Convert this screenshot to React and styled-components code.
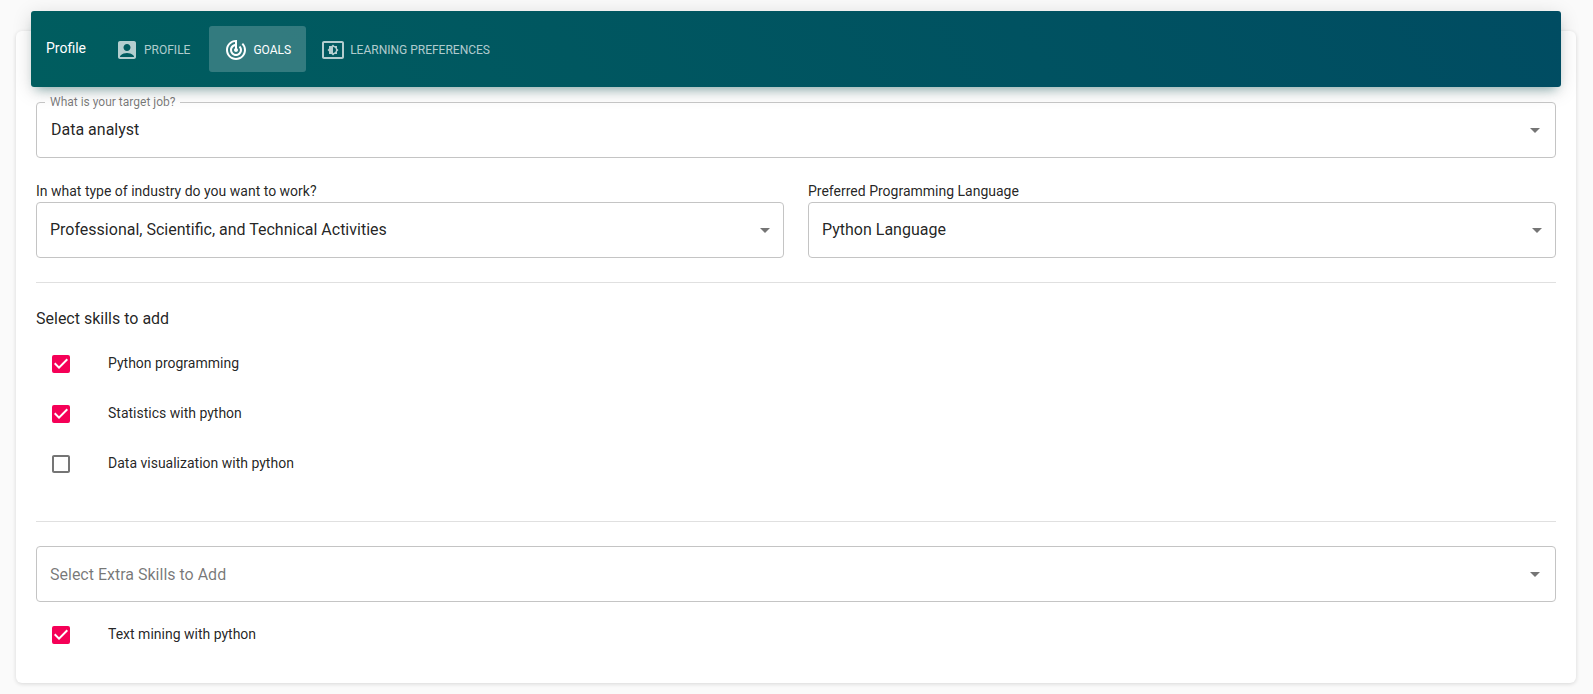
import { useId, useState } from "react";
import styled, { createGlobalStyle } from "styled-components";
import {
  MdAccountBox,
  MdArrowDropDown,
  MdCheckBox,
  MdCheckBoxOutlineBlank,
  MdSettingsBrightness,
  MdTrackChanges,
} from "react-icons/md";

const GlobalStyle = createGlobalStyle`
  *, *::before, *::after { box-sizing: border-box; }
  body {
    margin: 0;
    background: #fafafa;
    color: rgba(0, 0, 0, 0.87);
    font-family: Roboto, "Liberation Sans", sans-serif;
    font-size: 14px;
    line-height: 20px;
    -webkit-font-smoothing: antialiased;
  }
`;

const Page = styled.main`
  display: flow-root;
  padding: 0 17px 11px 16px;
`;

const Card = styled.section`
  display: flex;
  flex-direction: column;
  margin-top: 31px;
  padding-bottom: 23px;
  border-radius: 6px;
  background: #fff;
  box-shadow: 0 1px 4px rgba(0, 0, 0, 0.14);
`;

const Header = styled.header`
  display: flex;
  align-items: center;
  margin: -20px 15px 0;
  padding: 15px;
  border-radius: 3px;
  background: linear-gradient(60deg, #005d5f, #004c62);
  box-shadow: 0 4px 20px rgba(0, 0, 0, 0.14), 0 7px 10px -5px rgba(0, 96, 96, 0.4);
  color: #fff;
`;

const Title = styled.h1`
  margin: 0 14px 2px 0;
  font-size: 14px;
  font-weight: 400;
`;

const Tabs = styled.nav`
  display: flex;
`;

const Tab = styled.button`
  display: flex;
  align-items: center;
  gap: 5px;
  height: 46px;
  padding: 2px 15px 0;
  border: 0;
  border-radius: 3px;
  background: ${(p) => (p.$active ? "rgba(255, 255, 255, 0.2)" : "transparent")};
  color: ${(p) => (p.$active ? "#fff" : "rgba(255, 255, 255, 0.7)")};
  font: 400 12px/20px Roboto, "Liberation Sans", sans-serif;
  text-transform: uppercase;
  cursor: pointer;

  &:nth-child(2) { margin-left: 4px; }
  svg { flex: none; }
`;

const Form = styled.form`
  display: flex;
  flex-direction: column;
  padding: 9px 20px 0;
`;

const Columns = styled.div`
  display: grid;
  grid-template-columns: 1fr 1fr;
  gap: 24px;
  margin-top: 24px;
`;

const Field = styled.div`
  display: flex;
  flex-direction: column;
`;

const FieldLabel = styled.label`
  padding-bottom: 2px;
  line-height: 18px;
`;

const Outline = styled.div`
  position: relative;
  height: 56px;
  border: 1px solid #c4c4c4;
  border-radius: 4px;
`;

const NotchedOutline = styled.fieldset`
  min-width: 0;
  margin: 0;
  padding: 0 0 6px;
  border: 1px solid #c4c4c4;
  border-radius: 4px;
`;

const NotchedBody = styled.div`
  position: relative;
  height: 42px;
  padding-left: 1px;
`;

const Notch = styled.legend`
  margin-left: 8px;
  padding: 0 5px;
  color: rgba(0, 0, 0, 0.54);
  font-size: 12px;
  line-height: 13px;

  label { display: block; }
`;

const Select = styled.select`
  display: block;
  width: 100%;
  height: 100%;
  padding: ${(p) => (p.$placeholder ? "2px" : "0")} 40px 0 13px;
  border: 0;
  outline: 0;
  appearance: none;
  background: transparent;
  color: ${(p) => (p.$placeholder ? "rgba(0, 0, 0, 0.54)" : "rgba(0, 0, 0, 0.87)")};
  font: 400 16px/24px Roboto, "Liberation Sans", sans-serif;
  cursor: pointer;
`;

const Arrow = styled(MdArrowDropDown)`
  position: absolute;
  top: calc(50% - 12px);
  right: ${(p) => (p.$inset ? "8px" : "6px")};
  color: rgba(0, 0, 0, 0.54);
  pointer-events: none;
`;

const Divider = styled.hr`
  width: 100%;
  height: 1px;
  margin: 24px 0;
  border: 0;
  background: #e0e0e0;
`;

const Heading = styled.h2`
  margin: 0 0 8px;
  font-size: 16px;
  font-weight: 400;
  line-height: 24px;
`;

const SkillList = styled.ul`
  margin: 0;
  padding: 0 0 0 13px;
  list-style: none;
`;

const SkillRow = styled.label`
  display: flex;
  align-items: center;
  gap: 35px;
  height: 50px;
  cursor: pointer;
`;

const SkillName = styled.span`
  padding-bottom: 2px;
`;

const CheckMark = styled.span`
  position: relative;
  display: flex;
  color: ${(p) => (p.$checked ? "#f50057" : "rgba(0, 0, 0, 0.54)")};
`;

const CheckInput = styled.input`
  position: absolute;
  inset: 0;
  width: 100%;
  height: 100%;
  margin: 0;
  opacity: 0;
  cursor: pointer;
`;

const SkillsGroup = styled.section`
  padding-bottom: 8px;
`;

const ExtraGroup = styled.section`
  display: grid;
  gap: 8px;
`;

function Skill({ name, initial }) {
  const [checked, setChecked] = useState(initial);
  const Icon = checked ? MdCheckBox : MdCheckBoxOutlineBlank;
  return (
    <li>
      <SkillRow>
        <CheckMark $checked={checked}>
          <CheckInput type="checkbox" checked={checked} onChange={(e) => setChecked(e.target.checked)} />
          <Icon size={24} aria-hidden="true" />
        </CheckMark>
        <SkillName>{name}</SkillName>
      </SkillRow>
    </li>
  );
}

function LabelledSelect({ label, value }) {
  const id = useId();
  return (
    <Field>
      <FieldLabel htmlFor={id}>{label}</FieldLabel>
      <Outline>
        <Select id={id} defaultValue={value}>
          <option>{value}</option>
        </Select>
        <Arrow size={24} aria-hidden="true" />
      </Outline>
    </Field>
  );
}

const TABS = [
  { name: "Profile", Icon: MdAccountBox },
  { name: "Goals", Icon: MdTrackChanges },
  { name: "Learning preferences", Icon: MdSettingsBrightness },
];

export default function App() {
  const [tab, setTab] = useState("Goals");
  return (
    <Page>
      <GlobalStyle />
      <Card>
        <Header>
          <Title>Profile</Title>
          <Tabs>
            {TABS.map(({ name, Icon }) => (
              <Tab key={name} type="button" $active={tab === name} onClick={() => setTab(name)}>
                <Icon size={24} aria-hidden="true" />
                {name}
              </Tab>
            ))}
          </Tabs>
        </Header>
        <Form>
          <NotchedOutline>
            <Notch>
              <label htmlFor="target-job">What is your target job?</label>
            </Notch>
            <NotchedBody>
              <Select id="target-job" defaultValue="Data analyst">
                <option>Data analyst</option>
              </Select>
              <Arrow $inset size={24} aria-hidden="true" />
            </NotchedBody>
          </NotchedOutline>
          <Columns>
            <LabelledSelect
              label="In what type of industry do you want to work?"
              value="Professional, Scientific, and Technical Activities"
            />
            <LabelledSelect label="Preferred Programming Language" value="Python Language" />
          </Columns>
          <Divider />
          <SkillsGroup>
            <Heading>Select skills to add</Heading>
            <SkillList>
              <Skill name="Python programming" initial={true} />
              <Skill name="Statistics with python" initial={true} />
              <Skill name="Data visualization with python" initial={false} />
            </SkillList>
          </SkillsGroup>
          <Divider />
          <ExtraGroup>
            <Outline>
              <Select $placeholder aria-label="Extra skills" defaultValue="Select Extra Skills to Add">
                <option>Select Extra Skills to Add</option>
              </Select>
              <Arrow $inset size={24} aria-hidden="true" />
            </Outline>
            <SkillList>
              <Skill name="Text mining with python" initial={true} />
            </SkillList>
          </ExtraGroup>
        </Form>
      </Card>
    </Page>
  );
}
